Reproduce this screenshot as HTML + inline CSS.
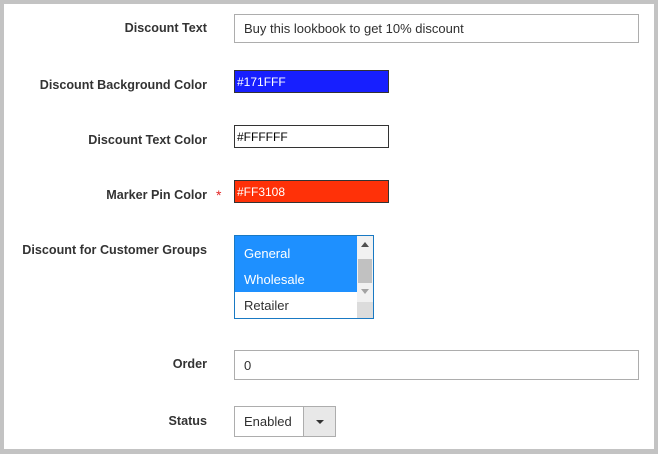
<!DOCTYPE html>
<html><head><style>
*{margin:0;padding:0;box-sizing:border-box}
body{width:658px;height:454px;background:#c3c3c3;position:relative;overflow:hidden;font-family:"Liberation Sans",sans-serif;}
.page{position:absolute;left:4px;top:4px;width:650px;height:445px;background:#fff}
.l{position:absolute;right:451px;font-size:12.6px;font-weight:bold;color:#333;text-align:right;white-space:nowrap}
.i{position:absolute;left:234px;border:1px solid #adadad;background:#fff;font-size:13px;color:#303030;padding-left:9px;display:flex;align-items:center}
.c{position:absolute;left:234px;width:155px;height:23px;border:1px solid #333;font-size:12px;padding-left:2px;display:flex;align-items:center}
</style></head><body>
<div class="page"></div>
<div class="l" style="top:21px">Discount Text</div>
<div class="i" style="top:14px;width:405px;height:29px">Buy this lookbook to get 10% discount</div>
<div class="l" style="top:78px">Discount Background Color</div>
<div class="c" style="top:70px;background:#171FFF;color:#fff">#171FFF</div>
<div class="l" style="top:133px">Discount Text Color</div>
<div class="c" style="top:125px;background:#fff;color:#000">#FFFFFF</div>
<div class="l" style="top:188px">Marker Pin Color</div>
<div style="position:absolute;left:216px;top:187px;color:#e22626;font-size:14px">*</div>
<div class="c" style="top:180px;background:#FF3108;color:#fff">#FF3108</div>
<div class="l" style="top:243px">Discount for Customer Groups</div>
<div style="position:absolute;left:234px;top:235px;width:140px;height:84px;border:1px solid #1979c3;background:#fff;font-size:13px">
 <div style="position:absolute;left:0;top:0;width:122px;height:56px;background:#1e90ff"></div>
 <div style="position:absolute;left:9px;top:10px;color:#fff">General</div>
 <div style="position:absolute;left:9px;top:36px;color:#fff">Wholesale</div>
 <div style="position:absolute;left:9px;top:62px;color:#303030">Retailer</div>
 <div style="position:absolute;left:122px;top:0;width:16px;height:82px;background:#f1f1f1">
  <div style="position:absolute;left:4px;top:6px;width:0;height:0;border-left:4px solid transparent;border-right:4px solid transparent;border-bottom:5px solid #505050"></div>
  <div style="position:absolute;left:1px;top:23px;width:14px;height:24px;background:#c1c1c1"></div>
  <div style="position:absolute;left:4px;top:53px;width:0;height:0;border-left:4px solid transparent;border-right:4px solid transparent;border-top:5px solid #a3a3a3"></div>
  <div style="position:absolute;left:0;top:66px;width:16px;height:16px;background:#dcdcdc"></div>
 </div>
</div>
<div class="l" style="top:357px">Order</div>
<div class="i" style="top:350px;width:405px;height:30px">0</div>
<div class="l" style="top:414px">Status</div>
<div class="i" style="top:406px;width:102px;height:31px">Enabled</div>
<div style="position:absolute;left:303px;top:406px;width:33px;height:31px;background:#e8e8e8;border:1px solid #adadad"><div style="position:absolute;left:12px;top:13px;border-left:4px solid transparent;border-right:4px solid transparent;border-top:4px solid #333"></div></div>
</body></html>
